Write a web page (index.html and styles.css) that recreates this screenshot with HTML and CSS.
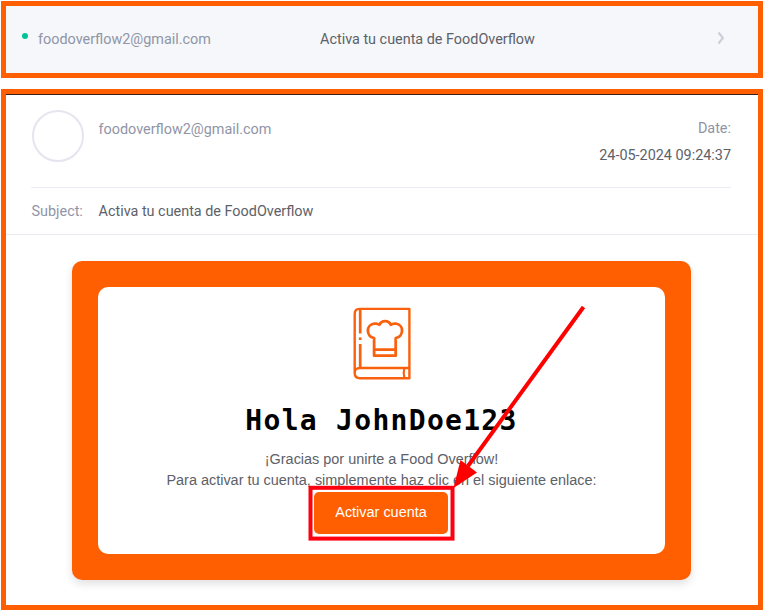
FILE: index.html
```html
<!DOCTYPE html>
<html lang="es">
<head>
<meta charset="utf-8">
<title>Activa tu cuenta de FoodOverflow</title>
<link rel="stylesheet" href="styles.css">
</head>
<body>
<section class="row-frame">
  <span class="unread"></span>
  <span class="row-sender">foodoverflow2@gmail.com</span>
  <span class="row-subject">Activa tu cuenta de FoodOverflow</span>
  <svg class="chevron" width="8" height="14" viewBox="0 0 8 14"><path d="M1.5 1.5 5.9 7 1.5 12.5" fill="none" stroke="#cdcdd8" stroke-width="2.1"/></svg>
</section>
<main class="mail">
  <header class="mail-head">
    <div class="avatar"></div>
    <div class="from">foodoverflow2@gmail.com</div>
    <div class="date"><span class="muted">Date:</span><span>24-05-2024 09:24:37</span></div>
  </header>
  <div class="subject"><span class="muted label">Subject:</span><span>Activa tu cuenta de FoodOverflow</span></div>
  <div class="banner">
    <div class="card">
      <svg class="book" width="60" height="74" viewBox="0 0 60 74" fill="none" stroke="#f9610e" stroke-width="2.4" stroke-linejoin="round">
        <path d="M57.4 61V1.9H7.5Q2.7 1.9 2.7 7V66Q2.7 71.3 8 71.3H57.4V61H8Q2.7 61 2.7 66"/>
        <path d="M8.2 2.5V26.5M8.2 37V61" stroke-width="2.7"/>
        <path d="M8.2 30.4V33" stroke-width="2.7"/>
        <path d="M52.4 61Q51 66 52.4 71" stroke-width="2.2"/>
        <path d="M22.1 48.7V31.2C13.8 29.5 13.7 17.5 22.4 16.7C25.1 16.4 26.6 17 27.4 17.8C29.6 12.8 36.7 12.8 38.8 17.8C39.8 16.8 41.3 16.5 43.7 16.7C52.3 17.5 52.1 29.5 43.7 31.2V48.7ZM22.1 42.6H43.7" stroke-width="2.8"/>
      </svg>
      <h1>Hola JohnDoe123</h1>
      <p>¡Gracias por unirte a Food Overflow!</p>
      <p>Para activar tu cuenta, simplemente haz clic en el siguiente enlace:</p>
      <a class="button">Activar cuenta</a>
    </div>
  </div>
</main>
<svg class="annotation" width="763" height="612" viewBox="0 0 763 612">
  <rect x="310.5" y="487.8" width="142" height="50.8" fill="none" stroke="#ff0010" stroke-width="4"/>
  <path d="M583.5 307 468 466" stroke="#f00" stroke-width="4"/>
  <path d="M453.5 488 460.5 460 477 472.5Z" fill="#f00"/>
</svg>
</body>
</html>
```
FILE: styles.css
```css
* { box-sizing: border-box; }
body {
  margin: 0;
  padding: 1.4px 0 0 1px;
  height: 612px;
  overflow: hidden;
  background: #fff;
  font: 14.4px/20px Roboto, sans-serif;
  color: #5d6168;
}
.row-frame {
  display: flex;
  align-items: center;
  height: 76.6px;
  border: 5px solid #ff5f00;
  background: #f5f7fa;
}
.unread {
  width: 6px;
  height: 6px;
  margin: -8px 0 0 15.5px;
  border-radius: 50%;
  background: #00c497;
}
.row-sender { width: 282px; margin: 1px 0 0 10.5px; color: #9095a6; }
.row-subject { flex: 1; margin-top: 1px; }
.chevron { margin: -3px 33.5px 0 0; }
.mail {
  height: 521px;
  margin-top: 11px;
  border: 5px solid #ff5f00;
}
.mail::before {
  content: "";
  display: block;
  height: 1px;
  margin-bottom: -1px;
  background: #3b2018;
}
.mail-head {
  display: flex;
  height: 94px;
  margin: 0 27px 0 25px;
  border-bottom: 1px solid #ebebf3;
  padding-top: 16px;
}
.avatar {
  width: 52px;
  height: 52px;
  margin-left: .5px;
  border: 2px solid #e5e5f0;
  border-radius: 50%;
}
.from { margin: 10px 0 0 15px; color: #9095a6; }
.date {
  display: flex;
  flex-direction: column;
  align-items: flex-end;
  gap: 7px;
  margin: 9px 0 0 auto;
}
.muted { color: #9095a6; }
.subject {
  display: flex;
  align-items: center;
  height: 47px;
  padding: 2px 0 0 25.5px;
  border-bottom: 1px solid #ebebf3;
}
.label { width: 67px; }
.banner {
  width: 619px;
  height: 319px;
  margin: 26px 0 0 66px;
  padding: 26px;
  border-radius: 10px;
  background: #ff5f00;
  box-shadow: 0 4px 8px rgba(0, 0, 0, .12);
}
.card {
  display: flex;
  flex-direction: column;
  align-items: center;
  height: 267.5px;
  padding-top: 20px;
  border-radius: 10px;
  background: #fff;
  font: 14.45px/21.5px "Liberation Sans", Arial, sans-serif;
}
.book { flex: none; }
h1 {
  margin: 20px 0 8px;
  color: #000;
  font: bold 28px/40px "DejaVu Sans Mono", monospace;
  letter-spacing: 1.3px;
}
p { margin: 0; white-space: nowrap; }
.button {
  width: 134px;
  height: 42.5px;
  margin: 0 1px 0 0;
  border-radius: 5px;
  background: #ff5f00;
  color: #fff;
  line-height: 41px;
  text-align: center;
}
.annotation { position: absolute; left: 0; top: 0; }
```
